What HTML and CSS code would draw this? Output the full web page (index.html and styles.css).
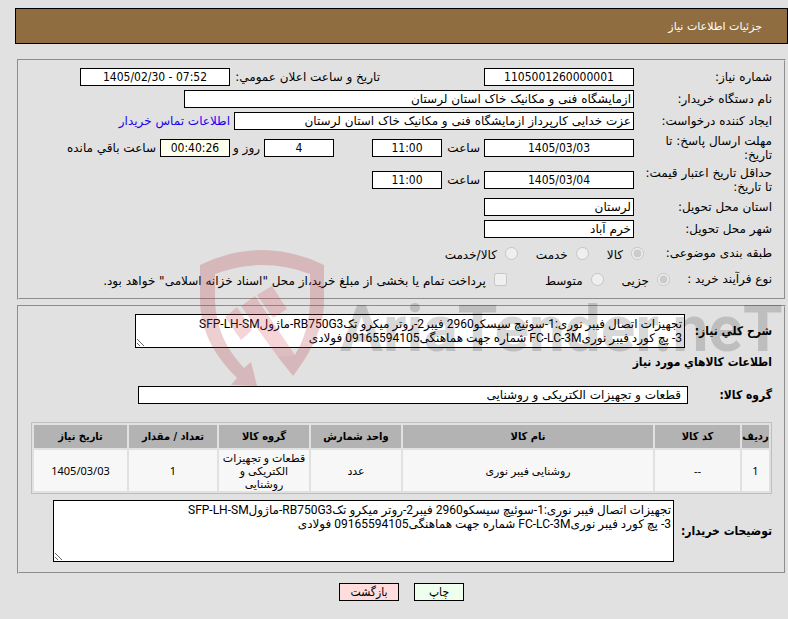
FILE: index.html
```html
<!DOCTYPE html>
<html lang="fa" dir="rtl">
<head>
<meta charset="utf-8">
<title>جزئیات اطلاعات نیاز</title>
<link rel="stylesheet" href="styles.css">
</head>
<body>
<h1 class="title">جزئیات اطلاعات نیاز</h1>
<form>
<section class="panel details">
  <div class="row">
    <label class="name" for="number">شماره نیاز:</label>
    <input class="box mid num" id="number" value="1105001260000001" readonly>
    <label class="announce" for="announced">تاریخ و ساعت اعلان عمومي:</label>
    <input class="box mid num" id="announced" dir="ltr" value="1405/02/30 - 07:52" readonly>
  </div>
  <div class="row">
    <label class="name" for="org">نام دستگاه خریدار:</label>
    <input class="box widest" id="org" value="ازمایشگاه فنی و مکانیک خاک استان لرستان" readonly>
  </div>
  <div class="row">
    <label class="name" for="creator">ایجاد کننده درخواست:</label>
    <input class="box wide" id="creator" value="عزت خدایی کارپرداز ازمایشگاه فنی و مکانیک خاک استان لرستان" readonly>
    <a href="#contact">اطلاعات تماس خریدار</a>
  </div>
  <div class="row tall">
    <label class="name" for="deadline">مهلت ارسال پاسخ: تا تاریخ:</label>
    <input class="box mid num" id="deadline" value="1405/03/03" readonly>
    <label class="hour" for="deadtime">ساعت</label>
    <input class="box short num" id="deadtime" value="11:00" readonly>
    <input class="box short num days" id="days" value="4" readonly>
    <label class="daylabel" for="days">روز و</label>
    <input class="box short num timer" id="left" value="00:40:26" readonly>
    <label for="left">ساعت باقي مانده</label>
  </div>
  <div class="row tall">
    <label class="name" for="valid">حداقل تاریخ اعتبار قیمت: تا تاریخ:</label>
    <input class="box mid num" id="valid" value="1405/03/04" readonly>
    <label class="hour" for="validtime">ساعت</label>
    <input class="box short num" id="validtime" value="11:00" readonly>
  </div>
  <div class="row">
    <label class="name" for="province">استان محل تحویل:</label>
    <input class="box mid" id="province" value="لرستان" readonly>
  </div>
  <div class="row">
    <label class="name" for="city">شهر محل تحویل:</label>
    <input class="box mid" id="city" value="خرم آباد" readonly>
  </div>
  <div class="row choices">
    <span class="name short-name">طبقه بندی موضوعی:</span>
    <label class="choice"><input type="radio" name="kind" checked disabled><span>کالا</span></label>
    <label class="choice"><input type="radio" name="kind" disabled><span>خدمت</span></label>
    <label class="choice"><input type="radio" name="kind" disabled><span>کالا/خدمت</span></label>
  </div>
  <div class="row choices">
    <span class="name shorter-name">نوع فرآیند خرید :</span>
    <label class="choice"><input type="radio" name="size" checked disabled><span>جزیی</span></label>
    <label class="choice"><input type="radio" name="size" disabled><span>متوسط</span></label>
    <label class="choice treasury"><input type="checkbox" disabled><span>پرداخت تمام یا بخشی از مبلغ خرید،از محل "اسناد خزانه اسلامی" خواهد بود.</span></label>
  </div>
</section>
<section class="panel goods">
  <div class="area-row">
    <label class="summary-label" for="summary">شرح کلي نیاز:</label>
    <textarea class="area summary" id="summary" readonly>تجهیزات اتصال فیبر نوری:1-سوئیچ سیسکو2960 فیبر2-روتر میکرو تکRB750G3-ماژولSFP-LH-SM
3- پچ کورد فیبر نوریFC-LC-3M شماره جهت هماهنگی09165594105 فولادی</textarea>
  </div>
  <h2 class="subtitle">اطلاعات کالاهاي مورد نیاز</h2>
  <div class="group-row">
    <label for="group">گروه کالا:</label>
    <input class="box group" id="group" value="قطعات و تجهیزات الکتریکی و روشنایی" readonly>
  </div>
  <table class="items">
    <colgroup><col class="c1"><col class="c2"><col><col class="c4"><col class="c5"><col class="c6"><col class="c7"></colgroup>
    <thead><tr><th>ردیف</th><th>کد کالا</th><th>نام کالا</th><th>واحد شمارش</th><th>گروه کالا</th><th>تعداد / مقدار</th><th>تاریخ نیاز</th></tr></thead>
    <tbody><tr><td>1</td><td>--</td><td>روشنایی فیبر نوری</td><td>عدد</td><td>قطعات و تجهیزات الکتریکی و روشنایی</td><td>1</td><td>1405/03/03</td></tr></tbody>
  </table>
  <div class="area-row">
    <label class="notes-label" for="notes">توضیحات خریدار:</label>
    <textarea class="area notes" id="notes" readonly>تجهیزات اتصال فیبر نوری:1-سوئیچ سیسکو2960 فیبر2-روتر میکرو تکRB750G3-ماژولSFP-LH-SM
3- پچ کورد فیبر نوریFC-LC-3M شماره جهت هماهنگی09165594105 فولادی</textarea>
  </div>
</section>
<div class="actions">
  <button type="button" class="print">چاپ</button>
  <button type="button" class="back">بازگشت</button>
</div>
</form>
<div class="watermark" dir="ltr">
  <svg width="126" height="138" viewBox="0 0 126 138" aria-hidden="true">
    <path fill="#b4333d" fill-opacity=".24" d="M0 15Q62-15 124 15V50Q125 84 93 126L78 107L95 105Q110 80 110 50V24Q62 6 15 24V50Q16 89 44 118L51 112L57 136L31 135L37 128Q0 92 0 50Z"/>
    <path fill="#d8404c" fill-opacity=".22" d="M25 67L37 57L52 80L41 90ZM41 56L55 46L95 105L78 107ZM57 45L72 36L87 59L73 68Z"/>
  </svg>
  <span>AriaTender.neT</span>
</div>
</body>
</html>
```
FILE: styles.css
```css
* { box-sizing: border-box; }
html { overflow: hidden; }
body {
  margin: 0;
  padding: 8px 0 8px 3px;
  background: #e1e1e1;
  color: #000;
  font: 12px/14px "DejaVu Sans", sans-serif;
  position: relative;
}
.title {
  margin: 0 0 15px 12px;
  height: 36px;
  padding: 0 25px;
  border: 1px solid #000;
  background: #8f6d40;
  color: #fff;
  font-size: 11px;
  font-weight: normal;
  line-height: 36px;
}
.panel {
  margin: 0 2px 5px 14px;
  border: 2px groove #e1e1e1;
  padding: 5px 12px 6px;
}
.row { display: flex; align-items: center; gap: 4px; min-height: 22px; }
.tall { min-height: 32px; }
.name { width: 134px; padding-left: 4px; flex: none; }
.box {
  height: 18px;
  margin: 0;
  padding: 0 2px;
  border: 1px solid #000;
  background: #fff;
  color: #000;
  font: 12px/14px "DejaVu Sans", sans-serif;
}
.num { text-align: center; font-family: "DejaVu Sans Condensed", "DejaVu Sans", sans-serif; }
.short { width: 70px; }
.mid { width: 150px; }
.wide { width: 400px; }
.widest { width: 450px; }
.announce { width: 146px; margin-right: 100px; white-space: nowrap; }
.hour { width: 34px; }
.days { margin-right: 34px; }
.daylabel { width: 26px; white-space: nowrap; }
.timer { background: #ffffee; }
a { color: #2200ee; text-decoration: none; }
.choices { min-height: 26px; gap: 0; }
.choices .short-name { width: 128px; }
.choices .shorter-name { width: 102px; }
.choice { display: flex; align-items: center; gap: 8px; margin-left: 18px; white-space: nowrap; }
.choice input { width: 13px; height: 13px; margin: 0; }
.choice span { padding-top: 4px; }
.treasury { margin-right: 20px; }
.area-row,
.group-row,
.subtitle {
  font: bold 12px/14px "DejaVu Sans Condensed", "DejaVu Sans", sans-serif;
}
.area-row { display: flex; align-items: center; gap: 4px; }
.summary-label { width: 83px; }
.notes-label { width: 94px; white-space: nowrap; }
.area {
  margin: 0;
  padding: 2px;
  border: 1px solid #000;
  background: #fff;
  color: #000;
  font: 12px/14px Roboto, "DejaVu Sans", sans-serif;
  overflow: hidden;
}
.summary { width: 550px; height: 34px; }
.notes { width: 621px; height: 62px; }
.goods { padding: 7px 12px 10px; }
.subtitle { margin: 7px 0 17px; }
.group-row { display: flex; align-items: center; margin-bottom: 18px; }
.group-row label { width: 84px; }
.group { width: 550px; padding: 0 6px; }
.items {
  width: 100%;
  margin: 0 0 6px;
  border: 1px solid #bebebe;
  border-spacing: 2px;
  table-layout: fixed;
  font-size: 11px;
  line-height: 13px;
  text-align: center;
}
.items th {
  height: 23px;
  padding: 0;
  background: #b3b3b3;
  font-family: "DejaVu Sans Condensed", "DejaVu Sans", sans-serif;
}
.items td {
  height: 41px;
  padding: 1px;
  background: #f7f7f7;
  font-family: "Noto Sans", "DejaVu Sans", sans-serif;
}
.c1 { width: 27px; }
.c2 { width: 85px; }
.c4 { width: 90px; }
.c5 { width: 90px; }
.c6 { width: 88px; }
.c7 { width: 93px; }
.actions { display: flex; justify-content: center; gap: 15px; margin: 9px 2px 0 14px; }
.actions button {
  height: 18px;
  padding: 0;
  border: 1px solid #000;
  color: #000;
  font: 12px/14px "DejaVu Sans Condensed", "DejaVu Sans", sans-serif;
}
.print { width: 50px; background: #eeffee; }
.back { width: 60px; background: #ffdddd; }
.watermark {
  position: absolute;
  top: 250px;
  left: 200px;
  display: flex;
  gap: 14px;
  pointer-events: none;
}
.watermark svg { flex: none; }
.watermark span {
  padding-top: 16px;
  color: #000;
  opacity: .15;
  font: bold 64px/128px Roboto, "Liberation Sans", sans-serif;
}
```
